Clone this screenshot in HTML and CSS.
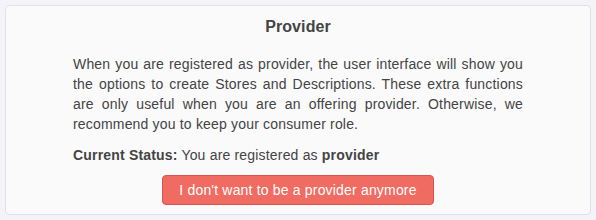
FILE: index.html
```html
<!DOCTYPE html>
<html>
<head>
<meta charset="utf-8">
<link rel="stylesheet" href="styles.css">
</head>
<body>
<div class="card">
  <h2 class="title">Provider</h2>
  <div class="content">
    <p class="desc">When you are registered as provider, the user interface will show you the options to create Stores and Descriptions. These extra functions are only useful when you are an offering provider. Otherwise, we recommend you to keep your consumer role.</p>
    <p class="status"><b>Current Status:</b> You are registered as <b>provider</b></p>
    <div class="actions">
      <button class="btn-danger">I don't want to be a provider anymore</button>
    </div>
  </div>
</div>
</body>
</html>
```
FILE: styles.css
```css
html, body {
  margin: 0;
  padding: 0;
  background: #f3f3f8;
}
body {
  padding: 5px;
  font-family: "Liberation Sans", Arial, sans-serif;
  font-size: 14px;
  line-height: 20px;
  color: #444;
  letter-spacing: 0.18px;
}
.card {
  background: #fafafb;
  border: 1px solid #e1e0e8;
  border-radius: 4px;
  padding: 10px 0 9px;
  box-sizing: border-box;
  height: 210px;
}
.title {
  margin: 0;
  text-align: center;
  font-size: 16px;
  line-height: 22px;
  font-weight: bold;
  color: #444;
  letter-spacing: 0.1px;
}
.content {
  width: 450px;
  margin: 16px auto 0;
}
.desc {
  margin: 0;
  text-align: justify;
}
.status {
  margin: 11px 0 0;
}
.actions {
  display: flex;
  justify-content: center;
  margin-top: 10px;
}
.btn-danger {
  font-family: "Liberation Sans", Arial, sans-serif;
  font-size: 14px;
  line-height: 20px;
  letter-spacing: 0.18px;
  padding: 4px 16px;
  color: #fff;
  background: #f06b62;
  border: 1px solid #d9534f;
  border-radius: 4px;
}
```
